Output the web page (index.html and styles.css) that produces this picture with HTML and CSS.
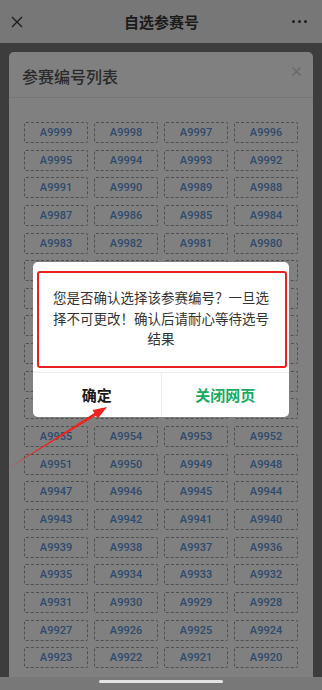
FILE: index.html
```html
<!DOCTYPE html>
<html lang="zh-CN">
<head>
<meta charset="utf-8">
<title>自选参赛号</title>
<link rel="stylesheet" href="styles.css">
</head>
<body>
<div class="app">
  <header class="nav">
    <svg class="nav-close" width="12" height="12" viewBox="0 0 12 12"><path d="M1 1L11 11M11 1L1 11" stroke="#1e1e1e" stroke-width="1.4" fill="none"/></svg>
    <div class="nav-title">自选参赛号</div>
    <div class="nav-more"><i></i><i></i><i></i></div>
  </header>
  <main class="stage">
    <section class="panel">
      <div class="panel-head">
        <h2 class="panel-title">参赛编号列表</h2>
        <svg class="panel-close" width="9" height="9" viewBox="0 0 9 9"><path d="M0.5 0.5L8.5 8.5M8.5 0.5L0.5 8.5" stroke="#696969" stroke-width="1.5" fill="none"/></svg>
      </div>
      <div class="grid" id="grid"></div>
    </section>
  </main>
  <footer class="homebar"><span class="indicator"></span></footer>

  <div class="dialog">
    <div class="dialog-body">您是否确认选择该参赛编号？一旦选择不可更改！确认后请耐心等待选号结果</div>
    <div class="dialog-actions">
      <div class="btn btn-ok">确定</div>
      <div class="btn btn-close">关闭网页</div>
    </div>
    <div class="mark"></div>
  </div>

  <svg class="arrow" width="322" height="690" viewBox="0 0 322 690">
    <polygon points="9.5,467.5 94.3,413.1 92.5,410.1 107,407 97.7,418.7 95.9,415.7" fill="#f0231e"/>
  </svg>
</div>
<script>
  var g = document.getElementById('grid');
  var h = '';
  for (var n = 9999; n >= 9920; n--) {
    h += '<div class="cell">A' + n + '</div>';
  }
  g.innerHTML = h;
</script>
</body>
</html>
```

FILE: styles.css
```css
* { box-sizing: border-box; margin: 0; padding: 0; }
html, body { width: 322px; height: 690px; overflow: hidden; }
body {
  font-family: "Noto Sans CJK SC", "Noto Sans", sans-serif;
  background: #3d3d3d;
}
.app {
  position: relative;
  width: 322px;
  height: 690px;
  display: flex;
  flex-direction: column;
}
.nav {
  height: 43px;
  flex: none;
  background: #777777;
  display: flex;
  align-items: center;
  justify-content: space-between;
  padding: 0 15px 1px 11px;
}
.nav-close { display: block; margin-top: 1px; }
.nav-title {
  font-size: 15px;
  font-weight: 600;
  color: #1b1b1b;
  margin-left: 8px;
}
.nav-more { display: flex; gap: 3px; margin-top: 1px; }
.nav-more i {
  display: block;
  width: 3px; height: 3px;
  border-radius: 50%;
  background: #1e1e1e;
}
.stage {
  flex: 1;
  min-height: 0;
  background: #3d3d3d;
  padding: 9px 9px 0;
  overflow: hidden;
}
.panel {
  height: 100%;
  background: #808080;
  border-radius: 5px 5px 0 0;
  overflow: hidden;
}
.panel-head {
  height: 46px;
  border-bottom: 1px solid #767676;
  display: flex;
  align-items: center;
  justify-content: space-between;
  padding: 2px 12px 0 13px;
}
.panel-title {
  font-size: 16px;
  font-weight: 500;
  color: #2a2a2a;
}
.panel-close { display: block; margin-top: -8px; }
.grid {
  display: grid;
  grid-template-columns: repeat(4, 64px);
  column-gap: 6px;
  row-gap: 6.65px;
  padding: 24px 15px 0;
}
.cell {
  height: 21px;
  border: 1px dashed #505050;
  border-radius: 2px;
  display: flex;
  align-items: center;
  justify-content: center;
  font-family: Roboto, "Noto Sans", sans-serif;
  font-size: 11px;
  font-weight: 500;
  color: #2e4a6c;
}
.homebar {
  height: 13px;
  flex: none;
  background: #787878;
  display: flex;
  justify-content: center;
  padding-top: 3px;
}
.indicator {
  display: block;
  width: 124px;
  height: 3px;
  border-radius: 2px;
  background: #e4e4e4;
}
.dialog {
  position: absolute;
  left: 33px;
  top: 262px;
  width: 256px;
  height: 155px;
  background: #ffffff;
  border-radius: 5px;
  display: flex;
  flex-direction: column;
}
.dialog-body {
  height: 110px;
  padding: 25px 19px 0;
  font-size: 13.5px;
  line-height: 20.5px;
  color: #333333;
  text-align: center;
}
.dialog-actions {
  flex: 1;
  display: flex;
  border-top: 1px solid #ececec;
}
.btn {
  flex: 1;
  display: flex;
  align-items: center;
  justify-content: center;
  font-size: 15px;
  font-weight: 600;
  padding-bottom: 2px;
}
.btn-ok { color: #1a1a1a; border-right: 1px solid #ececec; }
.btn-close { color: #19ab60; }
.mark {
  position: absolute;
  left: 4px;
  top: 9px;
  width: 250px;
  height: 97px;
  border: 2.5px solid #e8201f;
  border-radius: 3px;
}
.arrow {
  position: absolute;
  left: 0;
  top: 0;
  pointer-events: none;
}
```
